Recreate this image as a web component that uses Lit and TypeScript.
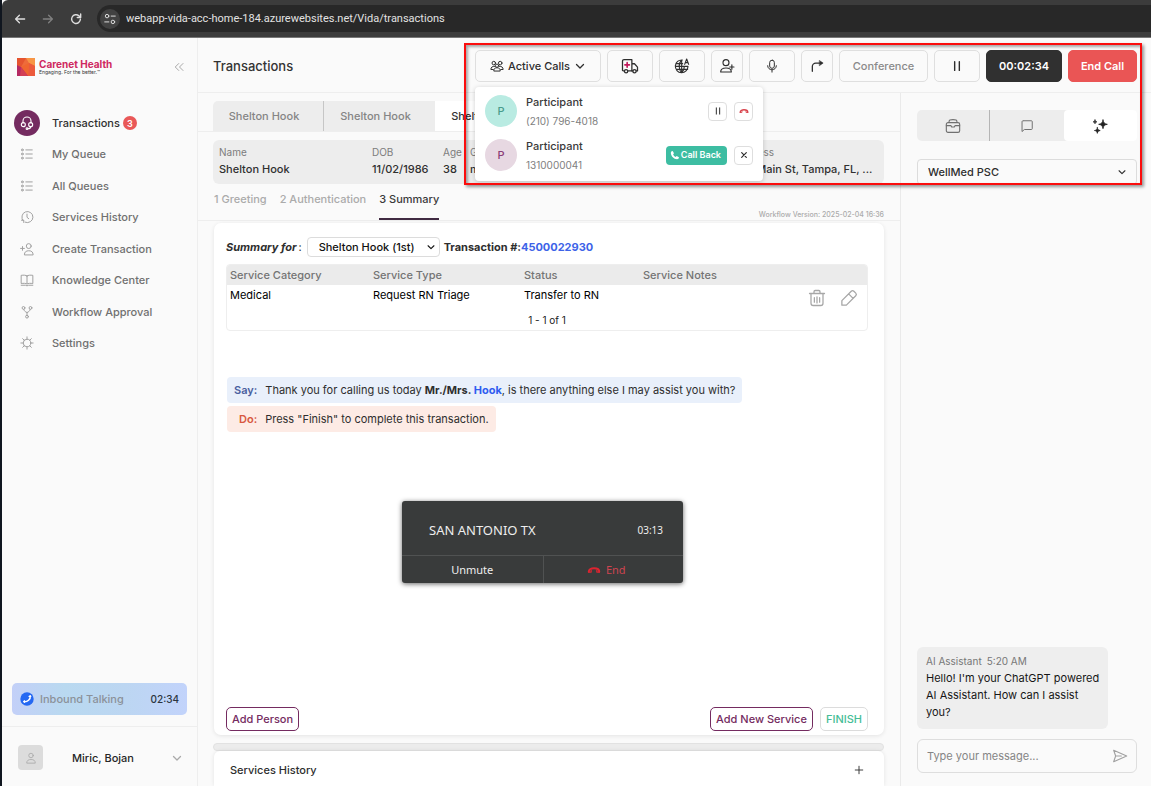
import { LitElement, html, css, svg, type TemplateResult } from "lit";
import { customElement, state } from "lit/decorators.js";
import { classMap } from "lit/directives/class-map.js";

const glyphs: Record<string, TemplateResult> = {
  back: svg`<path d="M20 12H5M11 5.5 4.5 12l6.5 6.5" stroke-width="2.2"/>`,
  forward: svg`<path d="M4 12h15M13 5.5l6.5 6.5-6.5 6.5" stroke-width="2.2"/>`,
  reload: svg`<path d="M19.5 12.5A7.5 7.5 0 1 1 17 6.6L19.8 9M20 3.5V9.3h-5.8" stroke-width="2.4"/>`,
  tune: svg`<circle cx="7" cy="7" r="3"/><path d="M14 7h7M3 17h7"/><circle cx="17" cy="17" r="3"/>`,
  collapse: svg`<path d="M11.5 5 4.5 12l7 7M20 5l-7 7 7 7"/>`,
  headset: svg`<path d="M6 12V9a6 6 0 0 1 12 0v3"/><circle cx="6.5" cy="14.5" r="3"/><circle cx="17.500" cy="14.500" r="3"/><path d="M17.500 17.500c0 2-1.500 3-4 3"/><circle cx="12" cy="20.500" r="1.300"/>`,
  list: svg`<circle cx="4" cy="5" r="1.600"/><circle cx="4" cy="12" r="1.600"/><circle cx="4" cy="19" r="1.600"/><path d="M10 5h11M10 12h11M10 19h11"/>`,
  history: svg`<path d="M5.500 18.500A9.500 9.500 0 1 1 9 21"/><path d="M2.500 17.500h4v4"/><path d="M12 7v5.500l3 2.500"/>`,
  addLeft: svg`<circle cx="15" cy="7" r="4.200"/><path d="M7.500 21.500c0-4.500 3-6.500 7.500-6.500s7.500 2 7.500 6.500zM1 11h6.500M4.300 7.800v6.400"/>`,
  book: svg`<path d="M12 5v13M12 5C10 3.500 6 3.500 2 4v14c4-.5 8-.5 10 1 2-1.500 6-1.500 10-1V4c-4-.5-8-.5-10 1zM2 21h7.500q2.500 2 5 0H22"/>`,
  branch: svg`<circle cx="6" cy="5" r="2.400"/><circle cx="18" cy="5" r="2.400"/><circle cx="12" cy="20" r="2.400"/><path d="M6.500 7.500c.5 3 2.500 4 5.500 5.500 3-1.500 5-2.500 5.500-5.500M12 13v4.500"/>`,
  gear: svg`<circle cx="12" cy="12" r="6.500"/><path d="M12 1.500v4M12 18.500v4M1.500 12h4M18.500 12h4M4.600 4.600l2.800 2.800M16.600 16.600l2.800 2.800M4.600 19.400l2.800-2.800M16.600 7.400l2.800-2.800"/>`,
  team: svg`<circle cx="6.500" cy="7" r="3"/><circle cx="17.500" cy="7" r="3"/><circle cx="12" cy="11.500" r="2.800"/><path d="M6.500 20c0-3.500 2-5 5.500-5s5.500 1.500 5.500 5zM8 12.500c-4 0-6.500 1.500-6.500 5.500h4M16 12.500c4 0 6.500 1.500 6.500 5.500h-4"/>`,
  down: svg`<path d="m5 9 7 7 7-7" stroke-width="2.600"/>`,
  ambulance: svg`<path d="M4.500 18.500H3a1 1 0 0 1-1-1V5.500a2 2 0 0 1 2-2h10.500v15H9M14.500 9h3.500l4 4.500v5h-1.500"/><circle cx="6.800" cy="19" r="2.200"/><circle cx="18" cy="19" r="2.200"/><path d="M14.500 18.500h1.300"/><path d="M8.200 7.500v6M5.200 10.500h6" stroke="#c2185b" stroke-width="2.200"/>`,
  globe: svg`<path d="M12.500 3A9.500 9.500 0 1 0 21 12.500M11.500 3c-5 5-5 14 0 19M11.500 22c3-3 4.200-6 4-9.500M3.500 8.500h9.500M3.500 17h17M11.500 3v19M2.500 12.500h18.500"/><path d="m16 9.500 3-8 3 8M17 7h4"/>`,
  addUser: svg`<circle cx="10.500" cy="7" r="4.500"/><path d="M2.500 21c0-4 3-6 8-6s8 2 8 6zM16 13.500h6.500M19.300 10.300v6.400"/>`,
  mic: svg`<rect x="8" y="2" width="8" height="14" rx="4"/><path d="M4.500 11.500c0 9.500 15 9.500 15 0M12 19v3.500"/>`,
  transfer: svg`<path d="M4 21v-8a6 6 0 0 1 6-6h10" stroke-width="2.200"/><path d="m16.500 2.800 6 4.200-6 4.200z" fill="currentColor" stroke-width="1"/>`,
  pause: svg`<path d="M8 4.500v15M16 4.500v15" stroke-width="2.400"/>`,
  hangup: svg`<path d="M3 15c0-8 18-8 18 0" stroke-width="3.400"/><path d="M2.800 15.500h4.400v-3M21.200 15.500h-4.400v-3" stroke-width="2"/>`,
  phone: svg`<path d="M6.500 2.500 9.500 8 7.500 10.500c1.500 3 3 4.500 6 6l2.500-2 5.500 3c0 3-2 4.500-4.500 4.500C9 21.500 2.500 15 2 7c0-2.500 1.500-4.500 4.500-4.500z" fill="currentColor" stroke="none"/>`,
  close: svg`<path d="m5 5 14 14M19 5 5 19" stroke-width="3.600"/>`,
  case: svg`<rect x="2" y="7" width="20" height="14.500" rx="2.500"/><path d="M6 6.500c0-4 1.500-4 6-4s6 0 6 4M2 11.500h7l1 2h4l1-2h7"/>`,
  chat: svg`<path d="M6 3h13.500a1.500 1.500 0 0 1 1.500 1.500v12a1.500 1.500 0 0 1-1.500 1.500H7.500L3.500 21.500V4.500A1.500 1.500 0 0 1 5 3z"/>`,
  sparkle: svg`<path d="M16.500 3c.7 4.300 2.200 5.800 6.500 6.500-4.300.7-5.800 2.200-6.500 6.500-.7-4.300-2.200-5.800-6.500-6.500 4.300-.7 5.800-2.200 6.500-6.500zM8 14.500c.5 2.800 1.500 3.800 4.300 4.300-2.800.5-3.800 1.500-4.300 4.200-.5-2.700-1.500-3.700-4.300-4.200 2.800-.5 3.800-1.500 4.300-4.300zM4.500 3c.3 1.800 1 2.500 2.800 2.800-1.800.3-2.500 1-2.800 2.800-.3-1.800-1-2.500-2.800-2.800C3.500 5.500 4.200 4.800 4.500 3z" fill="currentColor" stroke-width="1.200"/>`,
  trash: svg`<path d="M2 6h20M8 6V3.500A1.500 1.500 0 0 1 9.500 2h5A1.500 1.500 0 0 1 16 3.500V6M4 6v13a3 3 0 0 0 3 3h10a3 3 0 0 0 3-3V6M8.500 11.500v6M12 10.500v8M15.500 11.500v6"/>`,
  pencil: svg`<path d="M2.500 15.500 15 3a2.500 2.500 0 0 1 3.500 0L21 5.500A2.500 2.500 0 0 1 21 9L8.500 21.500h-6zM11.500 6.500l6 6"/>`,
  user: svg`<circle cx="12" cy="7" r="4.500"/><path d="M3.500 21.500c0-4.500 3-6.500 8.500-6.500s8.500 2 8.500 6.500z"/>`,
  send: svg`<path d="M2.500 3.500 22 12 2.500 20.500 5.500 12zM5.500 12H14"/>`,
  plus: svg`<path d="M12 3v18M3 12h18" stroke-width="2.200"/>`,
  ringing: svg`<circle cx="12" cy="12" r="11.500" fill="#2468f2" stroke="none"/><path d="M17.500 6.500c1 6-5 11-11 10" stroke="#fff" stroke-width="2.600"/><path d="M15.500 7.500h3M7.500 14.800v3" stroke="#fff" stroke-width="2"/>`,
};

const icon = (name: string, size = "s16") => html`<svg class="icon ${size}" viewBox="0 0 24 24" aria-hidden="true">${glyphs[name]}</svg>`;

const navItems = [
  { label: "My Queue", icon: "list" },
  { label: "All Queues", icon: "list" },
  { label: "Services History", icon: "history" },
  { label: "Create Transaction", icon: "addLeft" },
  { label: "Knowledge Center", icon: "book" },
  { label: "Workflow Approval", icon: "branch" },
  { label: "Settings", icon: "gear" },
];

@customElement("app-root")
export class AppRoot extends LitElement {
  @state() private callsOpen = true;

  static styles = css`
    :host {
      display: flex; flex-direction: column; box-sizing: border-box; position: relative;
      height: 100vh; overflow: hidden; border-left: 2px solid #10161f;
      background: #fafafa; color: #2e2e2e;
      font: 400 11px/16px Inter, "Liberation Sans", sans-serif;
    }
    *, *::before, *::after { box-sizing: border-box; }
    button, input, select { font: inherit; color: inherit; margin: 0; }
    button { cursor: pointer; white-space: nowrap; padding: 0; }
    a { color: inherit; text-decoration: none; }
    h1, h2, p, ul, dl, dd { margin: 0; padding: 0; font-weight: inherit; font-size: inherit; }
    ul { list-style: none; }
    .icon { display: block; flex: none; fill: none; stroke: currentColor; stroke-width: 1.7; stroke-linecap: round; stroke-linejoin: round; }
    .s8 { width: 8px; height: 8px; }
    .s10 { width: 10px; height: 10px; }
    .s12 { width: 12px; height: 12px; }
    .s14 { width: 14px; height: 14px; }
    .s16 { width: 16px; height: 16px; }
    .s18 { width: 18px; height: 18px; }

    .browser { display: flex; align-items: center; flex: none; height: 38px; padding: 0 0 0 11px; gap: 14px; background: #3c3c3c; border-bottom: 1px solid #777; border-top-left-radius: 6px; color: #dedede; }
    .browser button { display: grid; background: none; border: 0; }
    .browser button:disabled { color: #808080; }
    .address { display: flex; align-items: center; flex: 1; gap: 6px; height: 27px; padding-left: 3px; border-radius: 14px 0 0 14px; background: #282828; }
    .site { display: grid; place-items: center; width: 20px; height: 20px; border-radius: 50%; background: #424242; }
    .address input { flex: 1; min-width: 0; padding: 0; border: 0; outline: 0; background: none; color: #e2e2e2; font: 400 11px/16px Roboto, "Open Sans", sans-serif; }

    .app { display: grid; grid-template-columns: 196px minmax(0, 1fr) 250px; grid-template-rows: 55px minmax(0, 1fr); flex: 1; min-height: 0; }

    .side { grid-row: 1 / 3; display: flex; flex-direction: column; border-right: 1px solid #eeeeee; color: #707070; font-weight: 500; }
    .brand { display: flex; align-items: center; gap: 4px; height: 58px; padding: 0 12px 0 15px; }
    .mark { width: 18px; height: 18px; }
    .brand-name { flex: 1; color: #cf2860; font: 700 10px/9px Inter, sans-serif; white-space: nowrap; }
    .brand-name small { display: block; color: #333; font: 400 5px/6px Inter, sans-serif; }
    .brand button { border: 0; background: none; color: #999; }
    .nav { display: grid; grid-auto-rows: 1fr; height: 252px; margin-top: 11px; }
    .nav a { display: flex; align-items: center; height: 100%; padding-left: 12px; gap: 12px; }
    .nav .slot { display: grid; place-items: center; width: 26px; height: 26px; color: #a0a0a0; }
    .nav .current { color: #303030; }
    .nav .current .slot { border-radius: 50%; background: #742b60; color: #fff; }
    .label { display: flex; align-items: center; gap: 3px; }
    .badge { display: grid; place-items: center; width: 14px; height: 14px; border-radius: 50%; background: #e95858; color: #fff; font-size: 9px; font-weight: 600; }
    .inbound { display: flex; align-items: center; gap: 6px; height: 32px; margin: auto 10px 11px 10px; padding: 0 8px; border-radius: 5px; background: linear-gradient(90deg, #c3d0f8, #b9d9f0 30%, #bcd6f2 65%, #c2d3fb); color: #8b9199; }
    .inbound time { margin-left: auto; color: #2b3440; font-size: 10px; }
    .account { display: flex; align-items: center; height: 60px; padding: 2px 14px 0 16px; border: 0; border-top: 1px solid #eee; background: none; color: #262626; font-weight: 500; }
    .face { display: grid; place-items: center; width: 25px; height: 25px; margin-right: 29px; border-radius: 4px; background: #dcdcdc; color: #aaa; }
    .account > .icon { margin-left: auto; color: #aaa; }

    .top { grid-column: 2 / 4; display: flex; align-items: center; justify-content: space-between; padding: 2px 14px 0 15px; border-bottom: 1px solid #eee; }
    .top h1 { color: #333; font-size: 13px; line-height: 18px; font-weight: 500; }
    .tools { display: flex; gap: 6px; }
    .tools > button, .calls > button { display: flex; align-items: center; justify-content: center; gap: 4px; width: 46px; height: 32px; border: 1px solid #dfdfdf; border-radius: 5px; background: #fafafa; font-weight: 500; }
    .tools > .slim { width: 32px; }
    .tools > .conference { width: 89px; color: #8a8a8a; }
    .tools > .timer { width: 76px; border-color: #303030; background: #303030; color: #fff; font-weight: 600; }
    .tools > .end { width: 69px; border-color: #ea5555; background: #ea5555; color: #fff; font-weight: 600; }
    .calls { position: relative; }
    .calls > button { width: 126px; }
    .menu { position: absolute; z-index: 5; top: 37px; left: 0; display: grid; gap: 12px; width: 288px; padding: 8px 10px 10px; border-radius: 4px; background: #fff; box-shadow: 0 1px 5px #0003; }
    .menu li { display: flex; align-items: center; gap: 7px; height: 32px; }
    .avatar { display: grid; place-items: center; width: 32px; height: 32px; margin-right: 2px; border-radius: 50%; background: #b9ebe2; color: #4a9c8d; font-weight: 500; }
    .avatar.rose { background: #e7d8e2; color: #8b3d78; }
    .who { flex: 1; display: grid; gap: 3px; font-weight: 500; color: #3a3a3a; }
    .who small { color: #808080; font-size: 10px; font-weight: 400; }
    .mini { display: grid; place-items: center; width: 19px; height: 19px; border: 1px solid #dedede; border-radius: 4px; background: #fff; }
    .mini.red { color: #d8434c; }
    .callback { display: flex; align-items: center; gap: 1px; height: 19px; padding: 0 6px 0 4px; border: 0; border-radius: 4px; background: #3dbda2; color: #fff; font-size: 9px; font-weight: 600; }

    .main { display: flex; flex-direction: column; min-height: 0; border-right: 1px solid #eaeaea; }
    .people { display: flex; flex: none; height: 39px; padding: 8px 16px 0 15px; border-bottom: 1px solid #eee; }
    .people button { width: 111px; padding: 0 8px 0 0; border: 0; border-right: 1px solid #c6c6c6; background: #ededed; color: #858585; font-weight: 500; }
    .people button:first-child { border-top-left-radius: 5px; }
    .people button:nth-child(2) { border-right: 0; }
    .people .active { border: 0; background: #fff; color: #333; }
    .facts { display: grid; grid-template-columns: 153px 71px 27px 265px minmax(0, 1fr); flex: none; margin: 8px 16px 0 15px; padding: 4px 6px; height: 44px; border-radius: 6px; background: #ededed; }
    .facts dt { color: #7c7c7c; font-size: 10px; }
    .facts dd { color: #303030; line-height: 18px; font-weight: 500; white-space: nowrap; }
    .steps { display: flex; flex: none; gap: 13px; height: 37px; padding: 0 16px; border-bottom: 1px solid #eee; color: #ababab; font-weight: 500; }
    .steps a { padding-top: 7px; height: 36px; }
    .steps a.on { color: #3a3a3a; border-bottom: 2px solid #402a42; }
    .steps small { align-self: end; margin-left: auto; font-size: 7px; line-height: 10px; font-weight: 500; }
    .card { flex: 1; display: flex; flex-direction: column; margin: 2px 16px 0 16px; padding: 13px 16px 4px 12px; border-radius: 7px; background: #fff; box-shadow: 0 1px 4px #00000018; }
    .for { display: flex; align-items: center; height: 21px; font-weight: 700; white-space: nowrap; }
    .for i { margin-right: 2px; }
    .for label span { font-weight: 400; }
    .for a { color: #3d63e8; }
    .pick { display: grid; grid-template-columns: minmax(0, 1fr) 10px; align-items: center; }
    .pick select { grid-area: 1 / 1 / 2 / 3; appearance: none; border: 1px solid #dcdcdc; border-radius: 4px; background: #fff; outline: 0; }
    .pick .icon { grid-area: 1 / 2; pointer-events: none; }
    .for .pick { width: 133px; margin: 0 4px 0 5px; grid-template-columns: minmax(0, 1fr) 14px; color: #111; }
    .for .pick select { height: 20px; padding: 0 11px; font-weight: 500; }
    .services { margin-top: 7px; border: 1px solid #eee; border-radius: 4px; overflow: hidden; }
    table { width: 100%; border-collapse: collapse; table-layout: fixed; color: #151515; }
    th, td { padding: 0 0 0 3px; text-align: left; font-weight: 400; }
    th { height: 20px; background: #ebebeb; color: #747474; font-weight: 500; }
    td { height: 26px; vertical-align: top; padding-top: 2px; color: #000; }
    .c1 { width: 143px; } .c2 { width: 151px; } .c3 { width: 119px; } .c5 { width: 62px; }
    .acts { display: flex; gap: 14px; padding-top: 2px; color: #a7a7a7; }
    .acts button { border: 0; background: none; }
    .pages { height: 19px; font-size: 10px; line-height: 19px; text-align: center; color: #222; }
    .script { align-self: start; display: flex; gap: 8px; height: 26px; margin-left: 1px; padding: 5px 7px; border-radius: 4px; white-space: nowrap; }
    .say { margin-top: 46px; background: #e9f0fb; }
    .say > strong { color: #4a5fa0; font-weight: 600; }
    .say a { color: #2f5cf0; }
    .do { margin-top: 3px; padding-left: 12px; background: #fdebe5; }
    .do > strong { color: #d8583f; font-weight: 600; }
    .foot { display: flex; gap: 7px; margin-top: auto; }
    .foot button { height: 24px; padding: 0 5px; border: 1px solid #742b60; border-radius: 5px; background: #fff; color: #742b60; font-weight: 500; }
    .foot button:nth-child(2) { margin-left: auto; }
    .foot .finish { border-color: #dcdcdc; color: #45bd97; }
    .split { flex: none; height: 8px; margin: 8px 16px 0 15px; border: 1px solid #e2e2e2; border-radius: 4px; background: #ececec; }
    .past { display: flex; align-items: center; justify-content: space-between; flex: none; height: 35px; margin: 0 16px; padding: 3px 20px 0 16px; border: 0; border-radius: 6px 6px 0 0; background: #fff; box-shadow: 0 0 4px #00000018; font-weight: 500; }

    .aside { display: flex; flex-direction: column; padding: 17px 14px 13px 16px; }
    .modes { display: grid; grid-template-columns: repeat(3, minmax(0, 1fr)); flex: none; height: 31px; border-radius: 5px; background: #ededed; }
    .modes button { display: grid; place-items: center; border: 0; background: none; color: #707070; }
    .modes button:first-child { border-right: 1px solid #b5b5b5; }
    .modes button:last-child { border-radius: 4px; background: #fff; color: #222; }
    .aside .pick { margin-top: 18px; grid-template-columns: minmax(0, 1fr) 20px; }
    .aside .pick select { height: 26px; padding: 0 10px; background: #fafafa; font-weight: 500; }
    .bubble { width: 191px; margin-top: auto; padding: 6px 8px 8px 9px; border-radius: 6px; background: #eeeeee; color: #161616; line-height: 17px; }
    .bubble header { display: flex; gap: 5px; margin-bottom: 1px; color: #777; font-size: 10px; line-height: 16px; }
    .write { display: flex; align-items: center; flex: none; height: 34px; margin-top: 10px; padding: 0 8px 0 9px; border: 1px solid #dedede; border-radius: 6px; color: #a0a0a0; }
    .write input { flex: 1; min-width: 0; padding: 0; border: 0; outline: 0; background: none; color: #333; }
    .write input::placeholder { color: #858585; opacity: 1; }
    .write button { border: 0; background: none; }

    .toast { position: absolute; z-index: 6; left: 400px; top: 501px; width: 281px; border-radius: 3px; background: #393b3b; color: #eee; box-shadow: 0 1px 5px #0009; font-family: "Noto Sans", "Open Sans", sans-serif; }
    .toast header { display: flex; align-items: center; justify-content: space-between; height: 54px; padding: 4px 20px 0 27px; font-size: 13px; }
    .toast time { font-size: 10px; }
    .toast div { display: grid; grid-template-columns: minmax(0, 1fr) minmax(0, 1fr); border-top: 1px solid #505252; }
    .toast button { display: flex; align-items: center; justify-content: center; gap: 5px; height: 27px; border: 0; background: none; font-size: 11px; }
    .toast button + button { padding-right: 14px; border-left: 1px solid #505252; color: #cf4450; }
    .toast .icon { color: #dd2430; }
    .frame { position: absolute; z-index: 10; left: 462px; right: 9px; top: 43px; height: 142px; border: 2px solid #fb0d0d; box-shadow: 2px 2px 3px #0006, inset 2px 2px 3px #0005; pointer-events: none; }
  `;

  private toggleCalls() {
    this.callsOpen = !this.callsOpen;
  }

  private renderSide() {
    return html`<aside class="side">
      <div class="brand">
        <svg class="mark" viewBox="0 0 18 18" aria-hidden="true">
          <rect width="18" height="18" rx="1" fill="#ee6b3b"/>
          <path d="M0 0h9L4 9 0 7z" fill="#e5542f"/><path d="M9 0h9v8l-6-3z" fill="#f79545"/><path d="M18 8v10h-7l1-13z" fill="#ec5a3c"/><path d="M4 9l8-4-1 13z" fill="#f0662f"/><path d="M0 7l4 2 7 9H0z" fill="#b52a63"/><path d="M4 9l7 9H3z" fill="#d33f55"/>
        </svg>
        <div class="brand-name">Carenet Health<small>Engaging. For the better.™</small></div>
        <button aria-label="Collapse menu">${icon("collapse", "s12")}</button>
      </div>
      <nav class="nav">
        <a class="current" href="#"><span class="slot">${icon("headset")}</span><span class="label">Transactions <span class="badge">3</span></span></a>
        ${navItems.map((n) => html`<a href="#"><span class="slot">${icon(n.icon, "s14")}</span>${n.label}</a>`)}
      </nav>
      <div class="inbound">${icon("ringing", "s14")}Inbound Talking<time>02:34</time></div>
      <button class="account"><span class="face">${icon("user", "s12")}</span>Miric, Bojan${icon("down", "s12")}</button>
    </aside>`;
  }

  private renderTop() {
    return html`<header class="top">
      <h1>Transactions</h1>
      <div class="tools">
        <div class="calls">
          <button aria-expanded=${this.callsOpen} @click=${this.toggleCalls}>${icon("team", "s14")}Active Calls ${icon("down", "s12")}</button>
          ${this.callsOpen ? html`<ul class="menu">
            <li><span class="avatar">P</span><span class="who">Participant<small>(210) 796-4018</small></span>
              <button class="mini" aria-label="Hold">${icon("pause", "s10")}</button><button class="mini red" aria-label="Hang up">${icon("hangup", "s10")}</button></li>
            <li><span class="avatar rose">P</span><span class="who">Participant<small>1310000041</small></span>
              <button class="callback">${icon("phone", "s10")}Call Back</button><button class="mini" aria-label="Dismiss">${icon("close", "s8")}</button></li>
          </ul>` : null}
        </div>
        <button aria-label="Ambulance">${icon("ambulance", "s18")}</button>
        <button aria-label="Language">${icon("globe")}</button>
        <button class="slim" aria-label="Add participant">${icon("addUser")}</button>
        <button aria-label="Microphone">${icon("mic", "s14")}</button>
        <button class="slim" aria-label="Transfer">${icon("transfer", "s14")}</button>
        <button class="conference">Conference</button>
        <button aria-label="Pause">${icon("pause", "s14")}</button>
        <button class="timer">00:02:34</button>
        <button class="end">End Call</button>
      </div>
    </header>`;
  }

  private renderMain() {
    const tabs = [0, 1, 2];
    return html`<main class="main">
      <div class="people">${tabs.map((i) => html`<button class=${classMap({ active: i === 2 })}>Shelton Hook</button>`)}</div>
      <dl class="facts">
        <div><dt>Name</dt><dd>Shelton Hook</dd></div>
        <div><dt>DOB</dt><dd>11/02/1986</dd></div>
        <div><dt>Age</dt><dd>38</dd></div>
        <div><dt>Gender</dt><dd>male</dd></div>
        <div><dt>Address</dt><dd>123 Main St, Tampa, FL, ...</dd></div>
      </dl>
      <nav class="steps"><a href="#">1 Greeting</a><a href="#">2 Authentication</a><a class="on" href="#">3 Summary</a><small>Workflow Version: 2025-02-04 16:36</small></nav>
      <section class="card">
        <div class="for"><label for="person"><i>Summary for</i><span>:</span></label>
          <span class="pick"><select id="person"><option>Shelton Hook (1st)</option></select>${icon("down", "s10")}</span>
          Transaction #:<a href="#">4500022930</a></div>
        <div class="services">
          <table>
            <thead><tr><th class="c1">Service Category</th><th class="c2">Service Type</th><th class="c3">Status</th><th>Service Notes</th><th class="c5"></th></tr></thead>
            <tbody><tr><td>Medical</td><td>Request RN Triage</td><td>Transfer to RN</td><td></td>
              <td><span class="acts"><button aria-label="Delete">${icon("trash", "s18")}</button><button aria-label="Edit">${icon("pencil", "s18")}</button></span></td></tr></tbody>
          </table>
          <div class="pages">1 - 1 of 1</div>
        </div>
        <p class="script say"><strong>Say:</strong><span>Thank you for calling us today <b>Mr./Mrs. <a href="#">Hook</a></b>, is there anything else I may assist you with?</span></p>
        <p class="script do"><strong>Do:</strong><span>Press "Finish" to complete this transaction.</span></p>
        <div class="foot"><button>Add Person</button><button>Add New Service</button><button class="finish">FINISH</button></div>
      </section>
      <div class="split"></div>
      <button class="past">Services History${icon("plus", "s10")}</button>
    </main>`;
  }

  private renderAside() {
    return html`<aside class="aside">
      <div class="modes"><button aria-label="Cases">${icon("case")}</button><button aria-label="Messages">${icon("chat", "s14")}</button><button aria-label="Assistant">${icon("sparkle")}</button></div>
      <span class="pick"><select aria-label="Client"><option>WellMed PSC</option></select>${icon("down", "s10")}</span>
      <article class="bubble"><header><span>AI Assistant</span><time>5:20 AM</time></header>Hello! I'm your ChatGPT powered AI Assistant. How can I assist you?</article>
      <form class="write"><input aria-label="Message" placeholder="Type your message..."><button type="button" aria-label="Send">${icon("send")}</button></form>
    </aside>`;
  }

  render() {
    return html`
      <div class="browser">
        <button aria-label="Back">${icon("back", "s14")}</button><button aria-label="Forward" disabled>${icon("forward", "s14")}</button><button aria-label="Reload">${icon("reload", "s14")}</button>
        <div class="address"><span class="site">${icon("tune", "s14")}</span><input aria-label="Address" .value=${"webapp-vida-acc-home-184.azurewebsites.net/Vida/transactions"}></div>
      </div>
      <div class="app">${this.renderSide()}${this.renderTop()}${this.renderMain()}${this.renderAside()}</div>
      <section class="toast"><header>SAN ANTONIO TX<time>03:13</time></header><div><button>Unmute</button><button>${icon("hangup", "s14")}End</button></div></section>
      <div class="frame"></div>
    `;
  }
}
